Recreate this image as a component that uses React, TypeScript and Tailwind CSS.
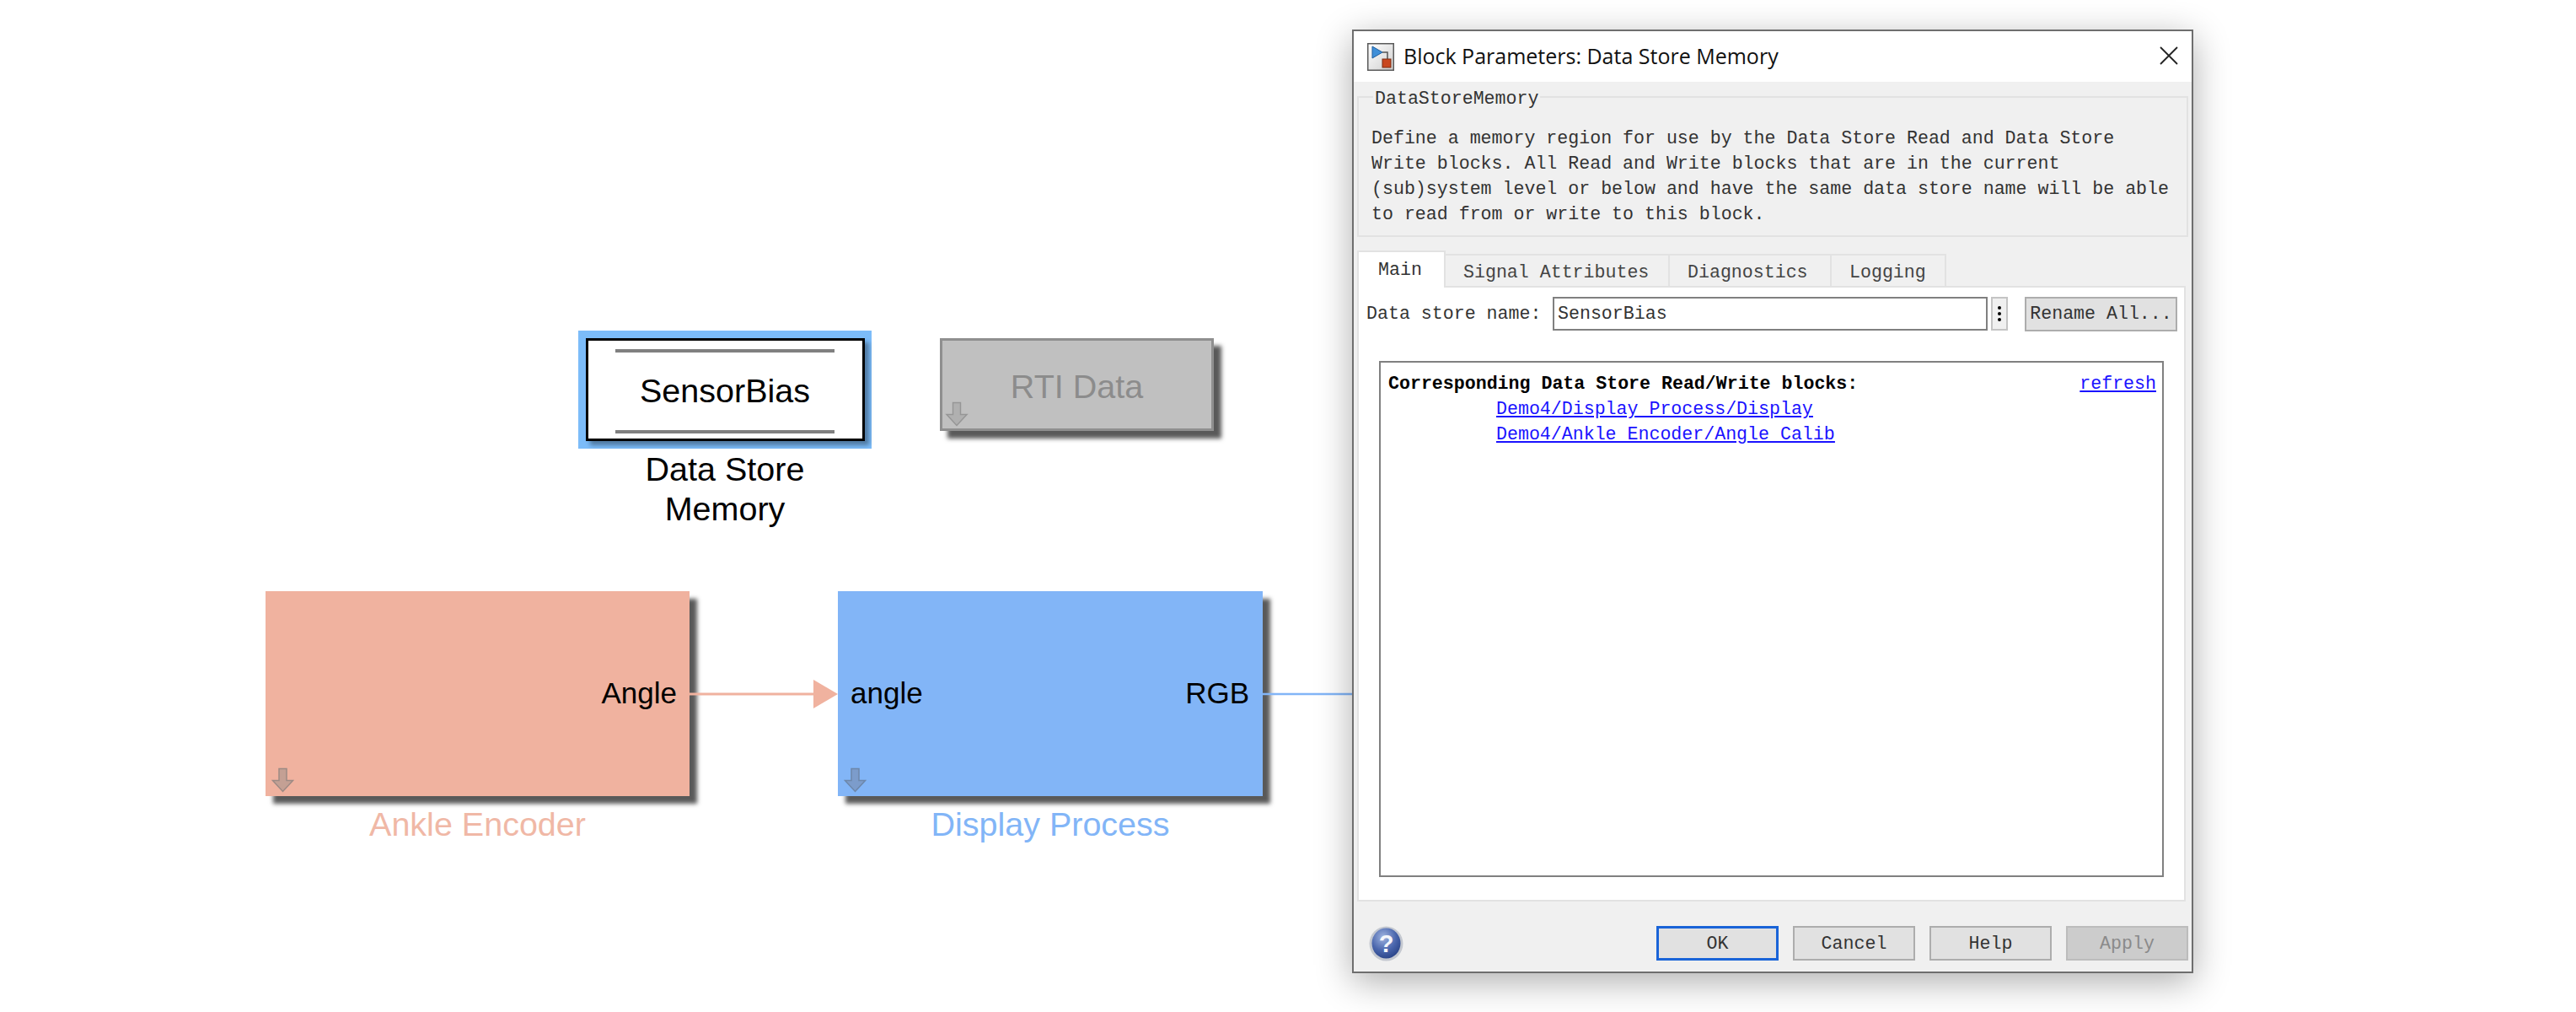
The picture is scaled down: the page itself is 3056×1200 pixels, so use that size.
import React from 'react';

const mono = "font-['Liberation_Mono',monospace] text-[21.6px] leading-[30px]";
const arial = "font-['Liberation_Sans',Arial,sans-serif]";

function DownArrow({ fill, stroke, className }: { fill: string; stroke: string; className: string }) {
  return (
    <svg viewBox="0 0 27 30" className={className}>
      <path d="M9 1.5h9v14h7.5L13.5 28.500 1.500 15.500H9z" fill={fill} stroke={stroke} strokeWidth="1.500" />
    </svg>
  );
}

function BlockIcon() {
  return (
    <svg viewBox="0 0 32 33" className="w-[32px] h-[33px] shrink-0">
      <defs>
        <linearGradient id="iconBg" x1="0" y1="0" x2="1" y2="1">
          <stop offset="0" stopColor="#ffffff" />
          <stop offset="1" stopColor="#cfcfcf" />
        </linearGradient>
      </defs>
      <rect x="0.750" y="0.750" width="30.500" height="31.500" fill="url(#iconBg)" stroke="#5a5a5a" strokeWidth="1.500" />
      <path d="M18 11h6v8" fill="none" stroke="#555" strokeWidth="1.500" />
      <path d="M6 4l12 7-12 7z" fill="#3f8fd8" stroke="#1f5f9f" />
      <rect x="18" y="19" width="10" height="10" fill="#c9471f" stroke="#7a2c12" />
    </svg>
  );
}

function HelpBall() {
  return (
    <svg viewBox="0 0 41 42" className="w-[41px] h-[42px]">
      <defs>
        <radialGradient id="ball" cx="0.4" cy="0.3" r="0.8">
          <stop offset="0" stopColor="#9fb4e0" />
          <stop offset="0.55" stopColor="#4a66ad" />
          <stop offset="1" stopColor="#223c80" />
        </radialGradient>
      </defs>
      <ellipse cx="20.500" cy="21" rx="20" ry="20.500" fill="#c4c8d0" />
      <ellipse cx="20.500" cy="20.500" rx="17" ry="18" fill="url(#ball)" />
      <text x="20.500" y="31" textAnchor="middle" fill="#f4f6fb" fontSize="29" fontWeight="700" fontFamily="Liberation Sans, sans-serif">?</text>
    </svg>
  );
}

function DialogButton({ label, variant }: { label: string; variant?: 'focus' | 'disabled' }) {
  let tone = 'border-2 border-[#adadad] bg-[#e1e1e1] text-[#333]';
  if (variant === 'focus') tone = 'border-[3px] border-[#1a64d8] bg-[#e1e1e1] text-[#333]';
  if (variant === 'disabled') tone = 'border-2 border-[#bcbcbc] bg-[#cccccc] text-[#8a8a8a]';
  return (
    <button className={`${mono} ${tone} w-[145px] h-[41px] flex items-center justify-center`}>{label}</button>
  );
}

function Tab({ label, width, active }: { label: string; width: string; active?: boolean }) {
  return (
    <div
      className={`${width} flex items-center pl-[21px] border-2 border-b-0 border-[#e2e2e2] -ml-[2px] first:ml-0 ${
        active ? 'h-[44px] bg-white pl-[23px] text-[#333] -mb-[2px] relative z-10' : 'h-[38px] bg-[#f0f0f0] pt-[3px] text-[#444]'
      }`}
    >
      {label}
    </div>
  );
}

export default function App() {
  return (
    <div className="relative w-[3056px] h-[1200px] overflow-hidden bg-white">
      {/* Diagram blocks */}
      <div className="absolute left-[686px] top-[392px] w-[348px] h-[140px] bg-[#7cbcf9] flex items-center justify-center">
        <div className={`${arial} w-[331px] h-[122px] border-[3px] border-black bg-white text-black text-[39.500px] shadow-[5px_5px_5px_rgba(0,0,0,0.35)] flex flex-col items-center justify-between pt-[10px] pb-[6px]`}>
          <div className="w-[260px] h-[4px] bg-[#808080]" />
          <span className="leading-none">SensorBias</span>
          <div className="w-[260px] h-[4px] bg-[#808080]" />
        </div>
      </div>
      <div className={`${arial} absolute left-[686px] top-[533px] w-[348px] text-center text-black text-[39.500px] leading-[47px]`}>
        Data Store
        <br />
        Memory
      </div>

      <div className={`${arial} absolute left-[1115px] top-[401px] w-[325px] h-[110px] bg-[#c0c0c0] border-[3px] border-[#8f8f8f] shadow-[9px_9px_5px_rgba(0,0,0,0.65)] text-[#8c8c8c] text-[39.500px] flex items-center justify-center pt-[5px]`}>
        RTI Data
        <DownArrow fill="#b0b0b0" stroke="#969696" className="absolute left-[3px] bottom-[2px] w-[28px] h-[30px]" />
      </div>

      <div className={`${arial} absolute left-[315px] top-[701px] w-[503px] h-[243px] bg-[#f0b29f] shadow-[9px_9px_5px_rgba(0,0,0,0.65)] text-black text-[35px] flex items-center justify-end pr-[15px]`}>
        Angle
        <DownArrow fill="#c4a094" stroke="#9d8a84" className="absolute left-[7px] bottom-[4px] w-[27px] h-[30px]" />
      </div>
      <div className={`${arial} absolute left-[315px] top-[954px] w-[503px] text-center text-[#f0b8a6] text-[39.500px] leading-[47px]`}>
        Ankle Encoder
      </div>

      <div className={`${arial} absolute left-[994px] top-[701px] w-[504px] h-[243px] bg-[#82b5f7] shadow-[9px_9px_5px_rgba(0,0,0,0.65)] text-black text-[35px] flex items-center justify-between pl-[15px] pr-[16px]`}>
        <span>angle</span>
        <span>RGB</span>
        <DownArrow fill="#7c9ccb" stroke="#6d87aa" className="absolute left-[7px] bottom-[4px] w-[27px] h-[30px]" />
      </div>
      <div className={`${arial} absolute left-[994px] top-[954px] w-[504px] text-center text-[#82b5f7] text-[39.500px] leading-[47px]`}>
        Display Process
      </div>

      {/* Signal lines */}
      <svg className="absolute left-[818px] top-[800px] w-[800px] h-[44px]" viewBox="0 0 800 44">
        <path d="M0 23h150" stroke="#f0b29f" strokeWidth="3" />
        <path d="M147 6l29 17-29 17z" fill="#f0b29f" />
        <path d="M680 23h110" stroke="#82b5f7" strokeWidth="2.500" />
      </svg>

      {/* Block Parameters dialog */}
      <div className={`${mono} absolute left-[1604px] top-[35px] w-[998px] h-[1119px] border-2 border-[#6e6e6e] bg-[#f0f0f0] shadow-[0_10px_40px_rgba(0,0,0,0.32)] flex flex-col text-[#333]`}>
        <div className="h-[60px] bg-white flex items-center pl-[16px] pr-[16px] shrink-0">
          <BlockIcon />
          <span className="ml-[11px] -mt-[2px] font-['Open_Sans',sans-serif] text-[25px] text-[#111]">Block Parameters: Data Store Memory</span>
          <svg viewBox="0 0 22 22" className="ml-auto w-[22px] h-[22px] -mt-[2px]">
            <path d="M1 1l20 20M21 1L1 21" stroke="#222" strokeWidth="1.800" />
          </svg>
        </div>

        <fieldset className="mx-[4px] mt-[3px] h-[181px] border-2 border-[#e2e2e2] pl-[15px] pr-[8px] shrink-0">
          <legend className="relative top-[2px] ml-[2px] px-[2px] leading-[30px]">DataStoreMemory</legend>
          <p className="mt-[19px] whitespace-pre">Define a memory region for use by the Data Store Read and Data Store</p>
          <p className="whitespace-pre">Write blocks. All Read and Write blocks that are in the current</p>
          <p className="whitespace-pre">(sub)system level or below and have the same data store name will be able</p>
          <p className="whitespace-pre">to read from or write to this block.</p>
        </fieldset>

        <div className="flex items-end mx-[4px] mt-[14px] h-[44px] shrink-0">
          <Tab label="Main" width="w-[105px]" active />
          <Tab label="Signal Attributes" width="w-[268px]" />
          <Tab label="Diagnostics" width="w-[194px]" />
          <Tab label="Logging" width="w-[138px]" />
        </div>

        <div className="mx-[4px] mr-[7px] h-[730px] bg-white border-2 border-[#e2e2e2] shrink-0 flex flex-col pl-[9px]">
          <div className="flex items-center h-[42px] mt-[10px]">
            <span className="w-[221px] shrink-0">Data store name:</span>
            <div className="w-[516px] h-[40px] border-2 border-[#808080] bg-white flex items-center pl-[4px]">SensorBias</div>
            <div className="ml-[4px] w-[20px] h-[40px] border-2 border-[#c4c4c4] bg-[#f0f0f0] flex flex-col items-center justify-center gap-[3px]">
              <span className="w-[4px] h-[4px] rounded-full bg-black" />
              <span className="w-[4px] h-[4px] rounded-full bg-black" />
              <span className="w-[4px] h-[4px] rounded-full bg-black" />
            </div>
            <button className="ml-[20px] w-[181px] h-[41px] border-2 border-[#adadad] bg-[#e1e1e1] text-[#333] flex items-center justify-center">Rename All...</button>
          </div>

          <div className="ml-[15px] mt-[35px] w-[931px] h-[612px] border-2 border-[#808080] bg-white pl-[9px] pr-[7px] pt-[10px]">
            <div className="flex justify-between">
              <span className="font-bold text-black">Corresponding Data Store Read/Write blocks:</span>
              <a className="text-[#1a12ff] underline">refresh</a>
            </div>
            <div className="pl-[128px] text-[#1a12ff] underline">
              <a className="block">Demo4/Display Process/Display</a>
              <a className="block">Demo4/Ankle Encoder/Angle Calib</a>
            </div>
          </div>
        </div>

        <div className="flex items-end flex-1 pl-[18px] pr-[4px] pb-[12px]">
          <HelpBall />
          <div className="ml-auto flex gap-[17px] pb-[1px]">
            <DialogButton label="OK" variant="focus" />
            <DialogButton label="Cancel" />
            <DialogButton label="Help" />
            <DialogButton label="Apply" variant="disabled" />
          </div>
        </div>
      </div>
    </div>
  );
}
